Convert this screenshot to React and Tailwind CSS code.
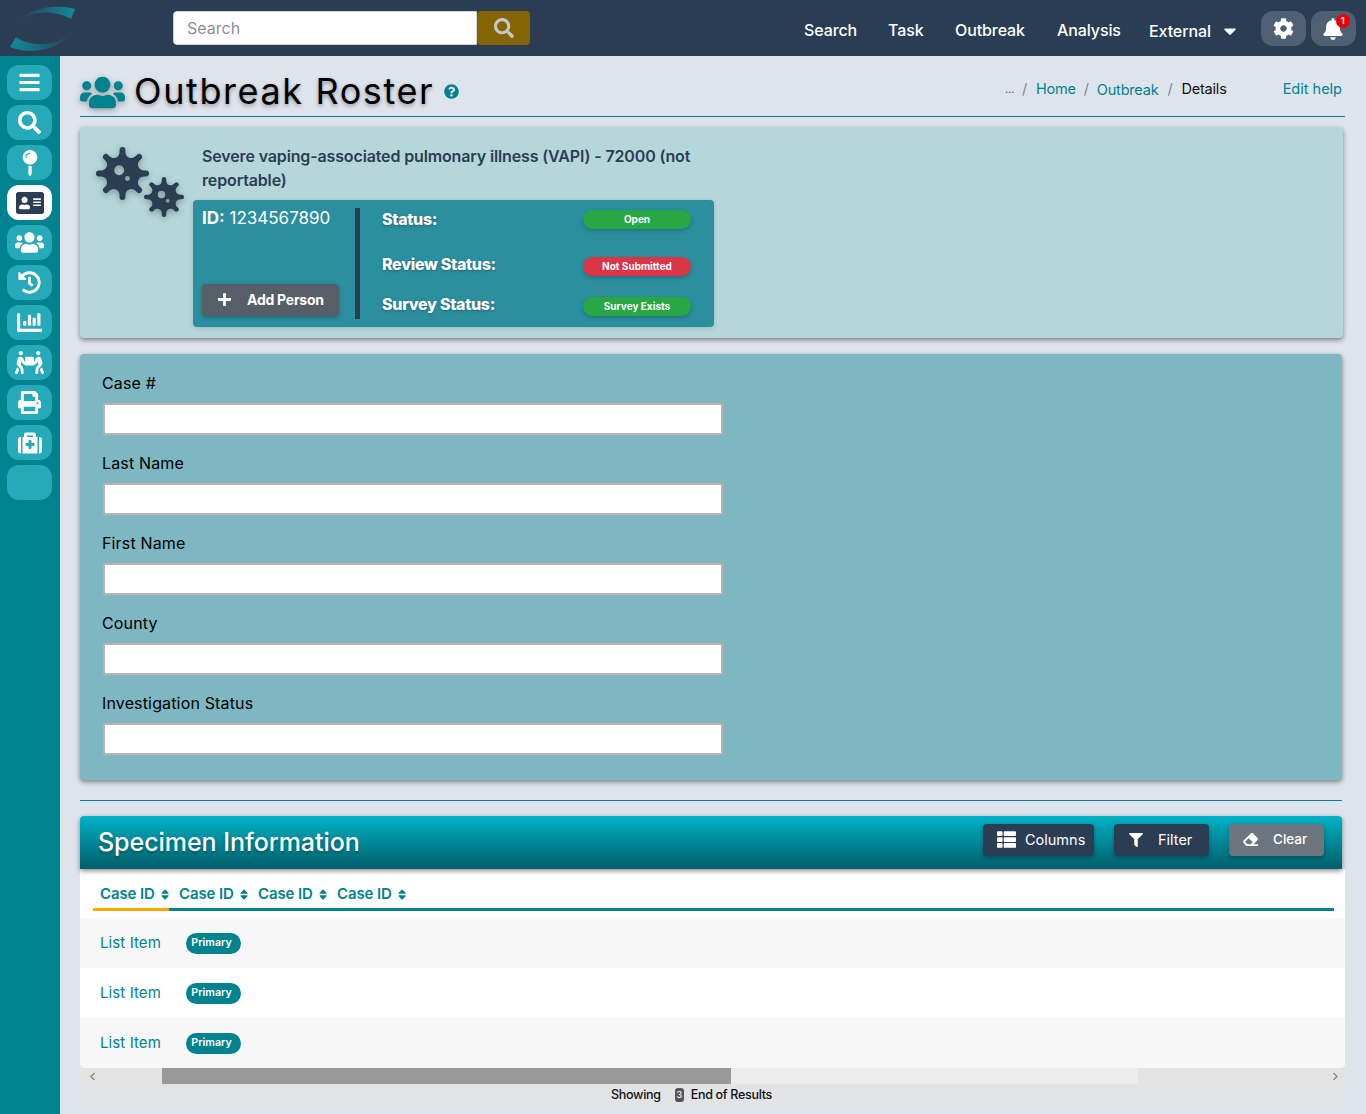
import React from 'react';
import {
  FaBars, FaSearch, FaMapPin, FaAddressCard, FaUsers, FaHistory, FaChartBar, FaPeopleCarry, FaPrint, FaMedkit,
  FaCog, FaBell, FaQuestionCircle, FaPlus, FaSort, FaThList, FaFilter, FaEraser, FaCaretDown, FaVirus,
  FaChevronLeft, FaChevronRight,
} from 'react-icons/fa';

const sideIcons = [
  { Icon: FaBars, size: 23 },
  { Icon: FaSearch, size: 23 },
  { Icon: FaMapPin, size: 26 },
  { Icon: FaAddressCard, size: 28, active: true },
  { Icon: FaUsers, size: 29 },
  { Icon: FaHistory, size: 23 },
  { Icon: FaChartBar, size: 25 },
  { Icon: FaPeopleCarry, size: 29 },
  { Icon: FaPrint, size: 23 },
  { Icon: FaMedkit, size: 24 },
  { Icon: null },
];

const fields = ['Case #', 'Last Name', 'First Name', 'County', 'Investigation Status'];

const Logo = () => (
  <svg width="68" height="46" viewBox="0 0 68 46" className="mt-[5px] ml-[10px]">
    <defs>
      <linearGradient id="logoTop" x1="0" x2="1" y1="0" y2="0">
        <stop offset="0" stopColor="#2b3d53" />
        <stop offset="1" stopColor="#0f8c9c" />
      </linearGradient>
      <linearGradient id="logoBottom" x1="0" x2="1" y1="0" y2="0">
        <stop offset="0" stopColor="#0f8c9c" />
        <stop offset="1" stopColor="#2b3d53" />
      </linearGradient>
    </defs>
    <path d="M8 16 C22 2 46 -1 65 4 L61 14 C46 5 24 5 8 16 Z" fill="url(#logoTop)" />
    <path d="M0 42 L6 32 C20 42 44 42 62 28 C48 46 20 50 0 42 Z" fill="url(#logoBottom)" />
  </svg>
);

const StatusRow = ({ label, color, text, pillClass, className = '' }) => (
  <div className={`flex h-[23px] items-start justify-between ${className}`}>
    <span className="text-[16px] font-extrabold leading-[23px] tracking-[-0.3px] text-white [text-shadow:0_1px_3px_rgba(0,0,0,0.3)]">{label}</span>
    <span className={`flex h-[19px] w-[108px] items-center justify-center rounded-full text-[10px] font-bold text-white shadow-[0_2px_4px_rgba(0,0,0,0.2)] ${color} ${pillClass}`}>
      {text}
    </span>
  </div>
);

const SortHead = ({ className }) => (
  <div className={`flex h-[33px] items-center gap-[6px] whitespace-nowrap border-b-[3px] pt-[2px] text-[15px] font-semibold tracking-[-0.1px] text-[#00838f] ${className}`}>
    Case ID <FaSort size={13} />
  </div>
);

const ListRow = ({ alt }) => (
  <div className={`flex h-[50px] items-center pl-5 ${alt ? 'bg-[#f7f7f7]' : 'bg-white'}`}>
    <span className="w-[86px] text-[15px] tracking-[0.1px] text-[#00838f]">List Item</span>
    <span className="flex h-[21px] w-[55px] items-center justify-center rounded-full bg-[#00838f] pr-[4px] text-[10.7px] font-semibold text-white">Primary</span>
  </div>
);

export default function App() {
  return (
    <div className="flex h-[1114px] w-[1366px] flex-col overflow-hidden bg-[#dee4ec] font-['Inter','Liberation_Sans',sans-serif] text-black">
      <header className="flex h-14 shrink-0 items-start bg-[#2b3d53]">
        <div className="w-[173px] shrink-0"><Logo /></div>
        <div className="mt-[11px] flex h-[34px] w-[357px]">
          <div className="flex flex-1 items-center rounded-l border border-[#ced4da] bg-white pl-[13px] text-[16px] text-[#8a9099]">Search</div>
          <div className="flex w-[53px] items-center justify-center rounded bg-[#856404] text-[#c3c7cc]"><FaSearch size={20} /></div>
        </div>
        <nav className="ml-[274px] mt-[17px] flex items-center text-[16px] font-medium tracking-[-0.1px] text-white">
          <span className="w-[84px]">Search</span>
          <span className="w-[67px]">Task</span>
          <span className="w-[102px]">Outbreak</span>
          <span className="w-[92px]">Analysis</span>
          <span className="mt-[2px]">External</span>
          <FaCaretDown size={20} className="ml-[9px] mt-[1px]" />
        </nav>
        <div className="ml-[21px] mt-[11px] flex gap-[5px]">
          <div className="flex h-[35px] w-[45px] items-center justify-center rounded-xl bg-[#4f6074] text-white"><FaCog size={21} /></div>
          <div className="relative flex h-[35px] w-[45px] items-center justify-center rounded-xl bg-[#4f6074] text-white">
            <FaBell size={22} />
            <span className="absolute right-[6px] top-[3px] flex h-[14px] w-[14px] items-center justify-center rounded-full bg-[#ee0000] text-[9.5px] font-semibold">1</span>
          </div>
        </div>
      </header>

      <div className="flex flex-1">
        <aside className="flex w-[60px] shrink-0 flex-col gap-[5px] bg-[#00838f] pl-[7px] pt-[9px]">
          {sideIcons.map(({ Icon, size, active }, i) => (
            <div key={i} className={`flex h-[35px] w-[45px] items-center justify-center rounded-xl ${active ? 'bg-white text-[#2b3d53]' : 'bg-[#26a9b8] text-white'}`}>
              {Icon && <Icon size={size} />}
            </div>
          ))}
        </aside>

        <main className="flex-1 pl-5 pr-[21px]">
          <div className="flex h-[61px] items-start border-b border-[#00838f]">
            <FaUsers size={45} className="mt-[14px] text-[#00838f] [filter:drop-shadow(0_2px_3px_rgba(0,0,0,0.3))]" />
            <h1 className="ml-[9px] mt-[12px] text-[36px] font-normal leading-[46px] tracking-[1.6px] [text-shadow:0_2px_4px_rgba(0,0,0,0.35)]">Outbreak Roster</h1>
            <FaQuestionCircle size={15} className="ml-[10px] mt-[28px] text-[#00838f]" />
            <div className="ml-auto mt-[21px] flex items-center text-[14.5px] tracking-[-0.2px] text-[#00838f]">
              <span className="text-[11px]">...</span>
              <span className="ml-[8px] mr-[9px] text-[#7d8791]">/</span>
              <span>Home</span>
              <span className="mx-[8px] text-[#7d8791]">/</span>
              <span className="mt-[2px]">Outbreak</span>
              <span className="mx-[9px] text-[#7d8791]">/</span>
              <span className="text-[#111]">Details</span>
              <span className="ml-[56px] mr-[3px] tracking-normal">Edit help</span>
            </div>
          </div>

          <section className="mr-[2px] mt-[10px] flex h-[211px] rounded bg-[#b5d7da] shadow-[0_2px_5px_rgba(0,0,0,0.45)]">
            <div className="relative w-[113px] shrink-0">
              <FaVirus size={53} className="absolute left-4 top-5 text-[#2b3d53] [filter:drop-shadow(0_2px_3px_rgba(0,0,0,0.3))]" />
              <FaVirus size={40} className="absolute left-[64px] top-[50px] text-[#2b3d53] [filter:drop-shadow(0_2px_3px_rgba(0,0,0,0.3))]" />
            </div>
            <div className="w-[521px]">
              <p className="ml-[9px] mt-[17px] w-[500px] text-[16px] font-semibold leading-6 tracking-[-0.14px] text-[#2b3d53]">
                Severe vaping-associated pulmonary illness (VAPI) - 72000 (not reportable)
              </p>
              <div className="mt-[8px] flex h-[127px] rounded bg-[#2b8f9f] shadow-[0_1px_4px_rgba(0,0,0,0.15)]">
                <div className="flex w-[162px] flex-col justify-between pb-[11px] pl-[9px] pt-[8px]">
                  <div className="text-[17px] leading-5 text-white"><b className="font-bold">ID:</b> 1234567890</div>
                  <div className="flex h-[32px] w-[137px] items-center rounded bg-[#565e67] pb-px pl-[15px] text-[14px] font-bold tracking-[-0.25px] text-white shadow-[0_2px_4px_rgba(0,0,0,0.25)]">
                    <FaPlus size={15} />
                    <span className="ml-[15px]">Add Person</span>
                  </div>
                </div>
                <div className="mt-[8px] h-[111px] w-[5px] bg-[#2b3d53]" />
                <div className="ml-[22px] w-[309px] pt-[8px]">
                  <StatusRow label="Status:" color="bg-[#28a745]" text="Open" pillClass="mt-[2px]" />
                  <StatusRow label="Review Status:" color="bg-[#dc3545]" text="Not Submitted" pillClass="mt-[4px]" className="mt-[22px]" />
                  <StatusRow label="Survey Status:" color="bg-[#28a745]" text="Survey Exists" pillClass="mt-[4px]" className="mt-[17px]" />
                </div>
              </div>
            </div>
          </section>

          <section className="mr-[3px] mt-4 h-[426px] rounded bg-[#7eb7c2] pl-[22px] pt-[19px] shadow-[0_2px_5px_rgba(0,0,0,0.45)]">
            {fields.map((f) => (
              <div key={f} className="mb-[18px] h-[62px]">
                <label className="block h-[30px] text-[16px] leading-5 tracking-[0.15px]">{f}</label>
                <div className="ml-px h-[32px] w-[620px] rounded-[2px] border-2 border-[#b9b3b3] bg-white" />
              </div>
            ))}
          </section>

          <div className="mr-[3px] mt-5 border-t border-[#00838f]" />

          <section className="mt-[15px]">
            <div className="relative z-10 mr-[3px] flex h-[53px] items-center rounded-t bg-gradient-to-b from-[#00b3c7] to-[#005f6b] pl-[18px] shadow-[0_2px_5px_rgba(0,0,0,0.45)]">
              <h2 className="pt-px text-[25px] font-medium tracking-[-0.05px] text-white [text-shadow:0_2px_3px_rgba(0,0,0,0.3)]">Specimen Information</h2>
              <div className="mb-[6px] ml-auto mr-[18px] flex gap-5 text-[14.5px] text-white">
                <div className="flex h-[32px] w-[111px] items-center rounded bg-[#2b3d53] pl-[14px] shadow-[0_2px_4px_rgba(0,0,0,0.3)]">
                  <FaThList size={19} /><span className="ml-[9px] font-normal">Columns</span>
                </div>
                <div className="flex h-[32px] w-[95px] items-center rounded bg-[#2b3d53] pl-[15px] shadow-[0_2px_4px_rgba(0,0,0,0.3)]">
                  <FaFilter size={14} /><span className="ml-[15px]">Filter</span>
                </div>
                <div className="flex h-[32px] w-[95px] items-center rounded bg-[#6c757d] pl-[14px] text-[13.5px] font-medium shadow-[0_2px_4px_rgba(0,0,0,0.3)]">
                  <FaEraser size={15} /><span className="ml-[15px]">Clear</span>
                </div>
              </div>
            </div>
            <div className="bg-[#e3e3e3]">
              <div className="overflow-hidden rounded-b-[5px] bg-white pt-[7px]">
                <div className="ml-[13px] mr-[11px] flex h-[35px] items-end border-b-[3px] border-[#00838f]">
                  <div className="-mb-[3px] flex">
                    <SortHead className="w-[76px] border-[#ffa500] pl-[7px]" />
                    <SortHead className="w-[79px] border-transparent pl-[10px]" />
                    <SortHead className="w-[79px] border-transparent pl-[10px]" />
                    <SortHead className="w-[79px] border-transparent pl-[10px]" />
                  </div>
                </div>
                <div className="mt-[7px]">
                  <ListRow alt />
                  <ListRow />
                  <ListRow alt />
                </div>
              </div>
              <div className="flex h-4 items-center text-[#8a8a8a]">
                <div className="flex w-[82px] items-center pl-2"><FaChevronLeft size={9} /></div>
                <div className="h-full w-[569px] bg-[#999999]" />
                <div className="h-full w-[407px] bg-[#ececec]" />
                <div className="ml-auto pr-[5px]"><FaChevronRight size={9} /></div>
              </div>
            </div>
            <div className="flex h-[22px] items-center justify-center bg-[#e1e3e6] pr-[42px] text-[12.5px] font-medium tracking-[-0.3px] text-[#111]">
              <span>Showing</span>
              <span className="ml-[14px] flex h-[14px] w-[9px] items-center justify-center rounded-[3px] bg-[#555] text-[9px] text-white">3</span>
              <span className="ml-[7px]">End of Results</span>
            </div>
          </section>
        </main>
      </div>
    </div>
  );
}
